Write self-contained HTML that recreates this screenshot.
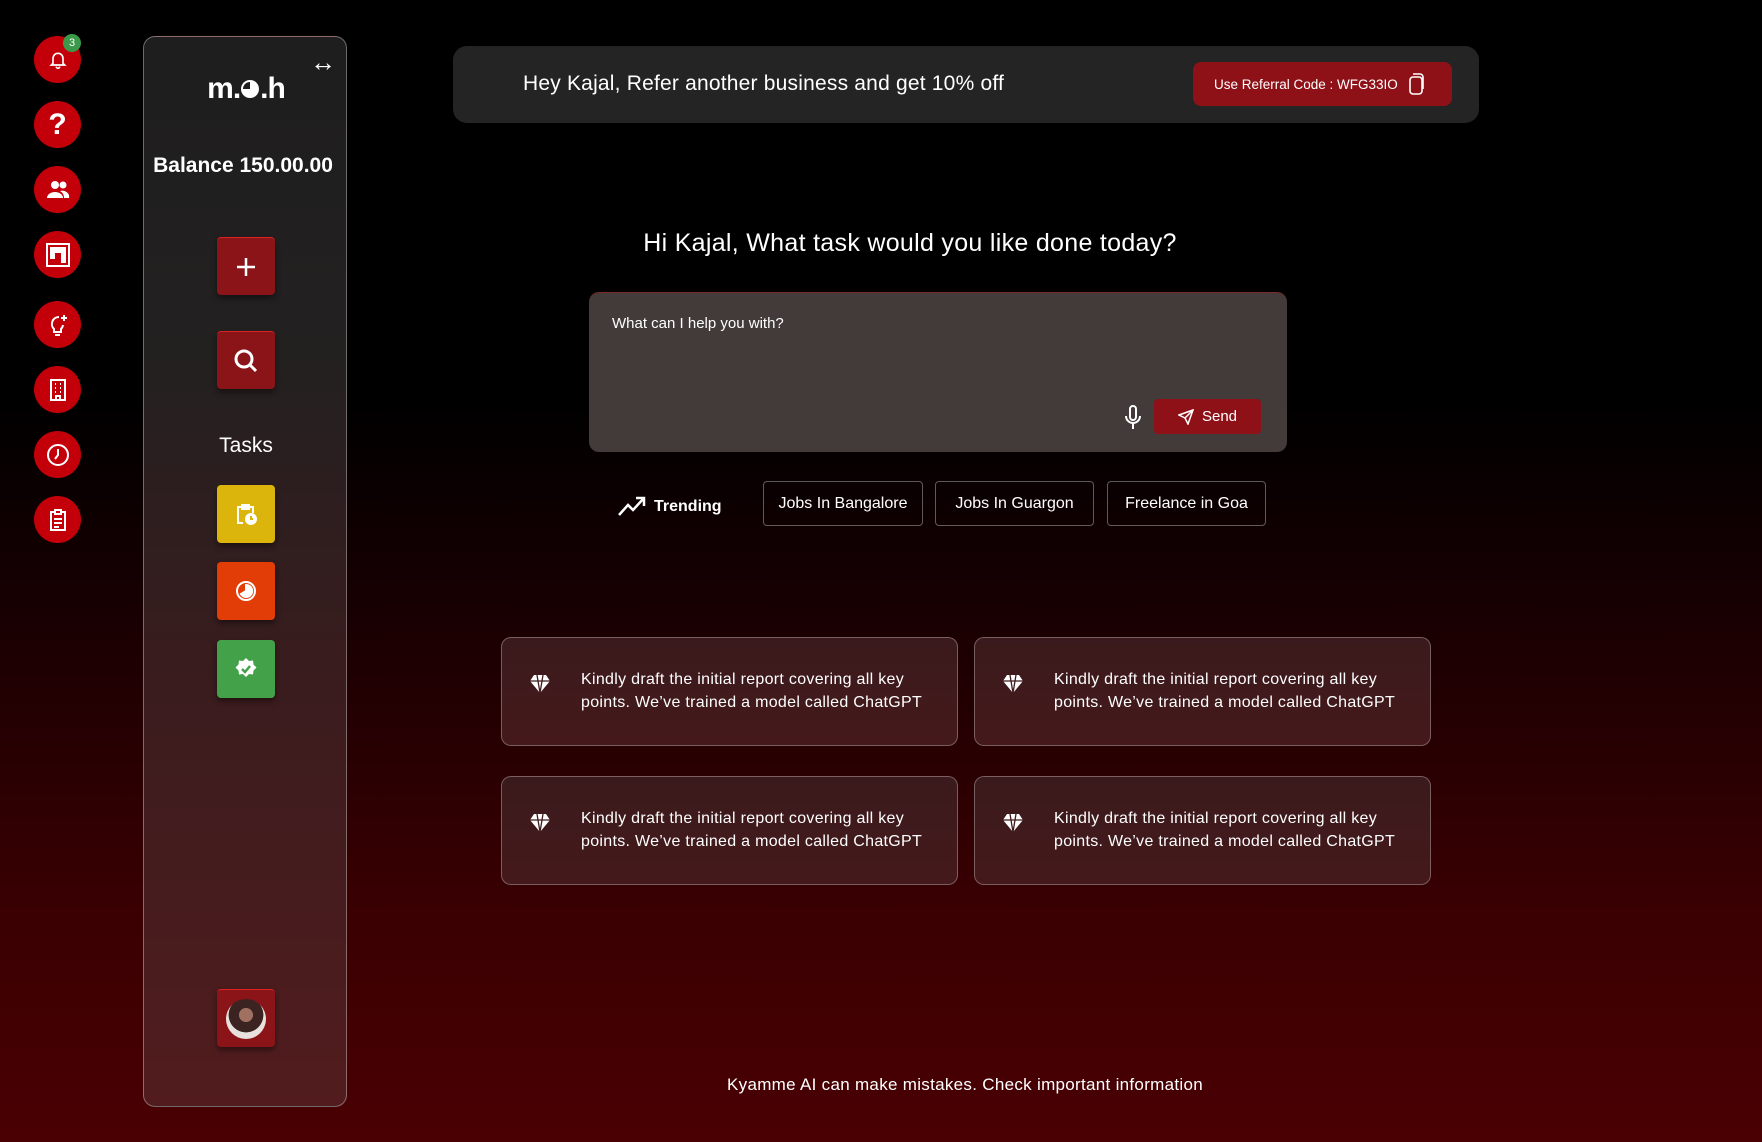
<!DOCTYPE html>
<html><head><meta charset="utf-8"><style>
*{box-sizing:border-box;margin:0;padding:0}
body{width:1762px;height:1142px;overflow:hidden;font-family:"Liberation Sans",sans-serif;color:#fff;
background:linear-gradient(180deg,#000 0%,#000 35%,#1a0002 55%,#3a0002 80%,#4a0003 100%);position:relative}
.c{position:absolute;left:34px;width:47px;height:47px;border-radius:50%;background:#c30009;display:flex;align-items:center;justify-content:center}
.panel{position:absolute;left:143px;top:36px;width:204px;height:1071px;border-radius:12px;border:1px solid rgba(255,255,255,.35);
background:linear-gradient(180deg,#1e1e1e 0%,#232020 30%,#3a1c1e 60%,#521c1e 100%)}
.sq{position:absolute;left:73px;width:58px;height:58px;border-radius:4px;display:flex;align-items:center;justify-content:center;box-shadow:0 3px 6px rgba(0,0,0,.45)}
.banner{position:absolute;left:453px;top:46px;width:1026px;height:77px;border-radius:14px;background:#242424}
.card{position:absolute;width:457px;height:109px;border-radius:10px;border:1px solid rgba(255,255,255,.3);background:linear-gradient(180deg,#3a1a1c,#45191b)}
.card .t{position:absolute;left:79px;top:30px;font-size:16px;line-height:23px;width:345px;letter-spacing:0.3px}
.card svg{position:absolute;left:27px;top:36px}
.chip{position:absolute;top:481px;height:45px;border:1px solid rgba(255,255,255,.35);border-radius:4px;font-size:16px;display:flex;align-items:center;justify-content:center}
</style></head><body>
<div class="c" style="top:36px"><svg width="20" height="20" viewBox="0 0 24 24" fill="none" stroke="#fff" stroke-width="2"><path d="M6 16V10a6 6 0 0112 0v6l2 2H4z M10 20a2 2 0 004 0"/></svg></div>
<div style="position:absolute;left:63px;top:34px;width:18px;height:18px;border-radius:50%;background:#3a9a4a;font-size:11px;text-align:center;line-height:18px">3</div>
<div class="c" style="top:101px;font-size:30px;font-weight:bold">?</div>
<div class="c" style="top:166px"><svg width="24" height="22" viewBox="0 0 24 22" fill="#fff"><circle cx="9" cy="6" r="4"/><circle cx="17" cy="6" r="3.5"/><path d="M1 19a8 6 0 0116 0z M14 12a7 6 0 019 7h-5a8 8 0 00-4-7z"/></svg></div>
<div class="c" style="top:231px"><svg width="26" height="26" viewBox="0 0 26 26" fill="none" stroke="#fff" stroke-width="2"><rect x="2" y="2" width="22" height="22"/><rect x="6" y="6" width="3" height="10" fill="#fff"/><rect x="11" y="6" width="4" height="4" fill="#fff"/><rect x="17" y="6" width="3" height="14" fill="#fff"/></svg></div>
<div class="c" style="top:301px"><svg width="22" height="24" viewBox="0 0 22 24" fill="none" stroke="#fff" stroke-width="2"><path d="M12 4a7 7 0 00-5 12v3h7v-3a7 7 0 002-4 M8 22h5"/><path d="M17 2v6M14 5h6"/></svg></div>
<div class="c" style="top:366px"><svg width="18" height="22" viewBox="0 0 18 22" fill="none" stroke="#fff" stroke-width="2"><rect x="2" y="1" width="14" height="20"/><path d="M6 5h1M11 5h1M6 9h1M11 9h1M6 13h1M11 13h1M7 21v-4h4v4"/></svg></div>
<div class="c" style="top:431px"><svg width="26" height="26" viewBox="0 0 26 26" fill="none" stroke="#fff" stroke-width="2"><circle cx="13" cy="13" r="10"/><path d="M13 7v6l-3 4"/></svg></div>
<div class="c" style="top:496px"><svg width="18" height="22" viewBox="0 0 18 22" fill="none" stroke="#fff" stroke-width="2"><rect x="2" y="3" width="14" height="18"/><rect x="6" y="1" width="6" height="4" fill="#c30009"/><path d="M5 10h8M5 14h8M5 18h5"/></svg></div>

<div class="panel">
<div style="position:absolute;left:166px;top:10px;font-size:26px;font-weight:bold">↔</div>
<div style="position:absolute;left:0;width:204px;top:35px;text-align:center;font-size:30px;font-weight:bold;letter-spacing:-1px">m.<svg width="20" height="20" viewBox="0 0 20 20" style="vertical-align:-1px"><circle cx="10" cy="10" r="9" fill="#fff"/><path d="M10 10V3a7 7 0 00-7 7z" fill="#1e1e1e"/></svg>.h</div>
<div style="position:absolute;left:6px;width:186px;top:117px;text-align:center;font-size:21px;white-space:nowrap;font-weight:600">Balance 150.00.00</div>
<div class="sq" style="top:200px;background:#8b1418;border-top:1px solid #d22"><svg width="22" height="22" viewBox="0 0 22 22" stroke="#fff" stroke-width="2.5"><path d="M11 2v18M2 11h18"/></svg></div>
<div class="sq" style="top:294px;background:#8b1418;border-top:1px solid #d22"><svg width="26" height="26" viewBox="0 0 26 26" fill="none" stroke="#fff" stroke-width="3"><circle cx="11" cy="11" r="8"/><path d="M17 17l6 6"/></svg></div>
<div style="position:absolute;left:0;width:204px;top:397px;text-align:center;font-size:21px">Tasks</div>
<div class="sq" style="top:448px;background:#dbb40c"><svg width="24" height="24" viewBox="0 0 24 24" fill="none" stroke="#fff" stroke-width="2"><path d="M9 21H4V5h15v6M8 3h7v4H8z"/><circle cx="17" cy="17" r="5" fill="#fff"/><path d="M17 14v3h2" stroke="#dbb40c"/></svg></div>
<div class="sq" style="top:525px;background:#e33d07"><svg width="24" height="24" viewBox="0 0 24 24" fill="none" stroke="#fff" stroke-width="2"><circle cx="12" cy="12" r="9"/><path d="M12 6a6 6 0 11-5 9l5-3z" fill="#fff"/></svg></div>
<div class="sq" style="top:603px;background:#43a14a"><svg width="24" height="24" viewBox="0 0 24 24"><path d="M12 1l3 3 4-.5.5 4 3 3-3 3-.5 4-4-.5-3 3-3-3-4 .5-.5-4-3-3 3-3 .5-4 4 .5z" fill="#fff"/><path d="M8 12l3 3 5-6" stroke="#43a14a" stroke-width="2.5" fill="none"/></svg></div>
<div class="sq" style="top:952px;background:#8b1418;border-top:1px solid #d22"><div style="width:40px;height:40px;border-radius:50%;background:radial-gradient(circle at 50% 40%,#a07060 0 22%,#3a2320 23% 55%,#e8e0dc 56%)"></div></div>
</div>

<div class="banner">
<div style="position:absolute;left:70px;top:26px;font-size:21px;letter-spacing:0.2px">Hey Kajal, Refer another business and get 10% off</div>
<div style="position:absolute;left:740px;top:16px;width:259px;height:44px;border-radius:8px;background:#8f1118;font-size:13.5px;display:flex;align-items:center;padding-left:21px">Use Referral Code : WFG33IO
<svg style="margin-left:10px" width="16" height="22" viewBox="0 0 16 22" fill="none" stroke="#fff" stroke-width="1.6"><rect x="2" y="4" width="12" height="17" rx="3"/><path d="M5 1h7a3 3 0 013 3v12"/></svg></div>
</div>

<div style="position:absolute;left:560px;width:700px;top:229px;text-align:center;font-size:25px;letter-spacing:0.3px">Hi Kajal, What task would you like done today?</div>
<div style="position:absolute;left:589px;top:292px;width:698px;height:160px;border-radius:10px;background:#433a3a;border-top:1px solid #7a2a2a">
<div style="position:absolute;left:23px;top:22px;font-size:15px">What can I help you with?</div>
<svg style="position:absolute;left:535px;top:112px" width="18" height="26" viewBox="0 0 18 26" fill="none" stroke="#fff" stroke-width="2"><rect x="6" y="1" width="6" height="14" rx="3"/><path d="M2 11a7 7 0 0014 0M9 18v6"/></svg>
<div style="position:absolute;left:565px;top:106px;width:107px;height:35px;border-radius:4px;background:#8f1118;font-size:15px;display:flex;align-items:center;justify-content:center;gap:8px"><svg width="16" height="16" viewBox="0 0 16 16" fill="none" stroke="#fff" stroke-width="1.5"><path d="M15 1L1 6l6 3 3 6z M7 9l8-8"/></svg>Send</div>
</div>
<svg style="position:absolute;left:617px;top:495px" width="30" height="22" viewBox="0 0 30 22" fill="none" stroke="#fff" stroke-width="2.5"><path d="M2 20l9-10 5 5 11-12M19 3h8v8"/></svg>
<div style="position:absolute;left:654px;top:498px;font-size:16px;font-weight:600">Trending</div>
<div class="chip" style="left:763px;width:160px">Jobs In Bangalore</div>
<div class="chip" style="left:935px;width:159px">Jobs In Guargon</div>
<div class="chip" style="left:1107px;width:159px">Freelance in Goa</div>

<div class="card" style="left:501px;top:637px"><svg width="22" height="20" viewBox="0 0 22 20" fill="#fff"><path d="M5 1h12l4 6-10 12L1 7z"/><path d="M1 7h20M8 1l3 18M14 1l-3 18" stroke="#3f1a1c" stroke-width="1.3"/></svg><div class="t">Kindly draft the initial report covering all key points. We’ve trained a model called ChatGPT</div></div>
<div class="card" style="left:974px;top:637px"><svg width="22" height="20" viewBox="0 0 22 20" fill="#fff"><path d="M5 1h12l4 6-10 12L1 7z"/><path d="M1 7h20M8 1l3 18M14 1l-3 18" stroke="#3f1a1c" stroke-width="1.3"/></svg><div class="t">Kindly draft the initial report covering all key points. We’ve trained a model called ChatGPT</div></div>
<div class="card" style="left:501px;top:776px"><svg width="22" height="20" viewBox="0 0 22 20" fill="#fff"><path d="M5 1h12l4 6-10 12L1 7z"/><path d="M1 7h20M8 1l3 18M14 1l-3 18" stroke="#3f1a1c" stroke-width="1.3"/></svg><div class="t">Kindly draft the initial report covering all key points. We’ve trained a model called ChatGPT</div></div>
<div class="card" style="left:974px;top:776px"><svg width="22" height="20" viewBox="0 0 22 20" fill="#fff"><path d="M5 1h12l4 6-10 12L1 7z"/><path d="M1 7h20M8 1l3 18M14 1l-3 18" stroke="#3f1a1c" stroke-width="1.3"/></svg><div class="t">Kindly draft the initial report covering all key points. We’ve trained a model called ChatGPT</div></div>

<div style="position:absolute;left:565px;width:800px;top:1075px;text-align:center;font-size:17px;letter-spacing:0.3px">Kyamme AI can make mistakes. Check important information</div>
</body></html>
